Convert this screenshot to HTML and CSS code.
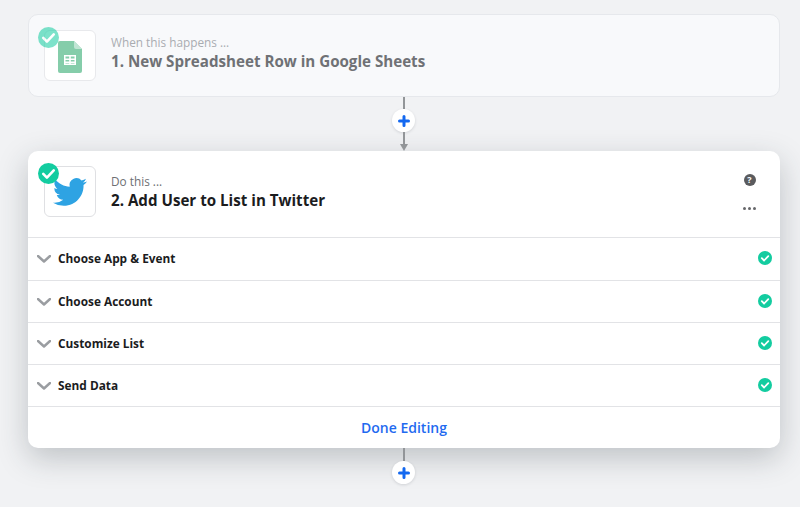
FILE: index.html
```html
<!DOCTYPE html>
<html>
<head>
  <title>Zap editor</title>
  <link rel="stylesheet" href="styles.css">
</head>
<body>
  <div class="editor">
    <div class="step step-done">
      <div class="step-head">
        <div class="app-icon">
          <span class="badge">
            <svg viewBox="0 0 24 24" class="tick"><path d="M6 12.500l4.200 4.200L18 8.500"/></svg>
          </span>
          <svg class="sheets" viewBox="0 0 24 32">
            <path d="M2 0h14l8 8v22a2 2 0 0 1-2 2H2a2 2 0 0 1-2-2V2a2 2 0 0 1 2-2z" fill="#23a566"/>
            <path d="M16 0l8 8h-6a2 2 0 0 1-2-2z" fill="#8ed1b1"/>
            <path d="M6 14h12v10H6z M7.500 15.500v2h3.700v-2z M12.800 15.500v2h3.700v-2z M7.500 19v1.500h3.700V19z M12.800 19v1.500h3.700V19z M7.500 22v.6h3.700V22z M12.800 22v.6h3.700V22z" fill="#fff" fill-rule="evenodd"/>
          </svg>
        </div>
        <div class="step-text">
          <div class="step-kicker">When this happens ...</div>
          <div class="step-title">1. New Spreadsheet Row in Google Sheets</div>
        </div>
      </div>
    </div>

    <div class="connector">
      <span class="line"></span>
      <span class="plus"><svg viewBox="0 0 12 12"><path d="M6 1.500v9M1.500 6h9"/></svg></span>
      <span class="line"></span>
      <span class="arrow"></span>
    </div>

    <div class="step step-active">
      <div class="step-head">
        <div class="app-icon">
          <span class="badge">
            <svg viewBox="0 0 24 24" class="tick"><path d="M6 12.500l4.200 4.200L18 8.500"/></svg>
          </span>
          <svg class="twitter" viewBox="0 0 24 24">
            <path d="M23.950 4.570a10 10 0 0 1-2.820.77 4.960 4.960 0 0 0 2.160-2.720c-.95.550-2 .96-3.130 1.190a4.920 4.920 0 0 0-8.380 4.480C7.690 8.100 4.070 6.130 1.640 3.160a4.820 4.820 0 0 0-.67 2.480c0 1.710.87 3.210 2.190 4.090a4.900 4.900 0 0 1-2.230-.62v.06a4.920 4.920 0 0 0 3.950 4.830 5 5 0 0 1-2.210.08 4.940 4.940 0 0 0 4.600 3.420A9.870 9.870 0 0 1 0 19.540a14 14 0 0 0 7.560 2.210c9.050 0 14-7.500 14-13.980 0-.21 0-.42-.02-.63a9.940 9.940 0 0 0 2.460-2.550z"/>
          </svg>
        </div>
        <div class="step-text">
          <div class="step-kicker">Do this ...</div>
          <div class="step-title">2. Add User to List in Twitter</div>
        </div>
        <div class="step-tools">
          <span class="help">?</span>
          <span class="dots"><i></i><i></i><i></i></span>
        </div>
      </div>

      <div class="row row-first">
        <svg class="chevron" viewBox="0 0 14 8"><path d="M1 1l6 5.500L13 1"/></svg>
        <span class="row-label">Choose App &amp; Event</span>
        <svg class="ok" viewBox="0 0 14 14"><circle cx="7" cy="7" r="7"/><path d="M3.800 7.200l2.300 2.300 4.200-4.400"/></svg>
      </div>
      <div class="row">
        <svg class="chevron" viewBox="0 0 14 8"><path d="M1 1l6 5.500L13 1"/></svg>
        <span class="row-label">Choose Account</span>
        <svg class="ok" viewBox="0 0 14 14"><circle cx="7" cy="7" r="7"/><path d="M3.800 7.200l2.300 2.300 4.200-4.400"/></svg>
      </div>
      <div class="row">
        <svg class="chevron" viewBox="0 0 14 8"><path d="M1 1l6 5.500L13 1"/></svg>
        <span class="row-label">Customize List</span>
        <svg class="ok" viewBox="0 0 14 14"><circle cx="7" cy="7" r="7"/><path d="M3.800 7.200l2.300 2.300 4.200-4.400"/></svg>
      </div>
      <div class="row">
        <svg class="chevron" viewBox="0 0 14 8"><path d="M1 1l6 5.500L13 1"/></svg>
        <span class="row-label">Send Data</span>
        <svg class="ok" viewBox="0 0 14 14"><circle cx="7" cy="7" r="7"/><path d="M3.800 7.200l2.300 2.300 4.200-4.400"/></svg>
      </div>
      <div class="step-foot">Done Editing</div>
    </div>

    <div class="connector connector-end">
      <span class="line"></span>
      <span class="plus"><svg viewBox="0 0 12 12"><path d="M6 1.500v9M1.500 6h9"/></svg></span>
    </div>
  </div>
</body>
</html>
```

FILE: styles.css
```css
html, body {
  height: 100%;
}

body {
  margin: 0;
  overflow: hidden;
  font-family: "Open Sans", Arial, sans-serif;
  background-color: #f1f2f4;
}

.editor {
  display: flex;
  flex-direction: column;
  width: 752px;
  margin-left: 28px;
  padding-top: 14px;
}

.step {
  box-sizing: border-box;
  background-color: #fff;
  border-radius: 10px;
}

.step-done {
  height: 83px;
  background-color: #f8f9fb;
  border: 1px solid #e6e8ec;
}

.step-done .step-head {
  height: 81px;
  padding-top: 15px;
  box-sizing: border-box;
  border: 0;
  margin-left: -1px;
}

.step-done .app-icon {
  border-color: #e8e9ec;
}

.step-done .sheets,
.step-done .badge {
  opacity: 0.55;
}

.step-done .step-text {
  padding-top: 4px;
}

.step-done .step-kicker {
  color: #a9acb1;
}

.step-done .step-title {
  color: #6f7175;
}

.step-active {
  height: 297px;
  box-shadow: 0 10px 30px rgba(40, 50, 60, 0.25);
}

.step-head {
  display: flex;
  align-items: flex-start;
  height: 87px;
  box-sizing: border-box;
  padding: 15px 24px 0 16px;
  border-bottom: 1px solid #e2e3e6;
}

.app-icon {
  position: relative;
  display: flex;
  align-items: center;
  justify-content: center;
  box-sizing: border-box;
  width: 52px;
  height: 51px;
  flex-shrink: 0;
  border: 1px solid #dfe0e3;
  border-radius: 6px;
  background-color: #fff;
}

.badge {
  position: absolute;
  left: -7px;
  top: -4px;
  display: flex;
  width: 21px;
  height: 21px;
  border-radius: 50%;
  background-color: #13cca0;
}

.tick {
  width: 21px;
  height: 21px;
}

.tick path {
  fill: none;
  stroke: #fff;
  stroke-width: 3;
  stroke-linecap: round;
  stroke-linejoin: round;
}

.sheets {
  width: 24px;
  height: 34px;
  margin-top: 2px;
}

.twitter {
  width: 34px;
  height: 34px;
  margin: 1px 0 0;
  fill: #2ea3e3;
}

.step-text {
  flex: 1;
  margin-left: 15px;
  padding-top: 7px;
}

.step-kicker {
  font-size: 11.8px;
  line-height: 16px;
  color: #6d6f73;
}

.step-title {
  margin-top: 1px;
  font-size: 15.15px;
  line-height: 20px;
  font-weight: 700;
  color: #1b1c1e;
}

.step-tools {
  display: flex;
  flex-direction: column;
  align-items: center;
  gap: 21px;
  margin-top: 8px;
}

.help {
  width: 12px;
  height: 12px;
  border-radius: 50%;
  background-color: #5a5b5e;
  color: #fff;
  font-size: 9px;
  line-height: 12px;
  font-weight: 700;
  text-align: center;
}

.dots {
  display: flex;
  gap: 2px;
}

.dots i {
  width: 3px;
  height: 3px;
  border-radius: 50%;
  background-color: #66676a;
}

.row {
  display: flex;
  align-items: center;
  box-sizing: border-box;
  height: 42px;
  padding: 0 8px 0 9px;
  border-bottom: 1px solid #e2e3e6;
}

.row-first {
  height: 43px;
}

.chevron {
  width: 14px;
  height: 8px;
  fill: none;
  stroke: #9a9da1;
  stroke-width: 2.400;
  stroke-linecap: round;
  stroke-linejoin: round;
}

.row-label {
  flex: 1;
  margin: 0 0 2px 7px;
  font-size: 11.85px;
  font-weight: 700;
  color: #1b1c1e;
}

.ok {
  width: 14px;
  height: 14px;
  margin-bottom: 2px;
}

.ok circle {
  fill: #13cca0;
}

.ok path {
  fill: none;
  stroke: #fff;
  stroke-width: 1.800;
  stroke-linecap: round;
  stroke-linejoin: round;
}

.step-foot {
  height: 41px;
  font-size: 14px;
  line-height: 42px;
  font-weight: 600;
  color: #1f6af0;
  text-align: center;
}

.connector {
  position: relative;
  display: flex;
  flex-direction: column;
  align-items: center;
  height: 54px;
  margin-left: -1px;
}

.connector-end .line {
  height: 13px;
}

.line {
  width: 2px;
  height: 12px;
  flex-shrink: 0;
  background-color: #929598;
}

.plus {
  display: flex;
  align-items: center;
  justify-content: center;
  flex-shrink: 0;
  width: 23px;
  height: 23px;
  border-radius: 50%;
  background-color: #fff;
  box-shadow: 0 1px 3px rgba(40, 50, 60, 0.15);
}

.plus svg {
  width: 12px;
  height: 12px;
  fill: none;
  stroke: #1368f0;
  stroke-width: 3;
  stroke-linecap: round;
}

.arrow {
  width: 0;
  height: 0;
  border-left: 4px solid transparent;
  border-right: 4px solid transparent;
  border-top: 7px solid #929598;
}
```
